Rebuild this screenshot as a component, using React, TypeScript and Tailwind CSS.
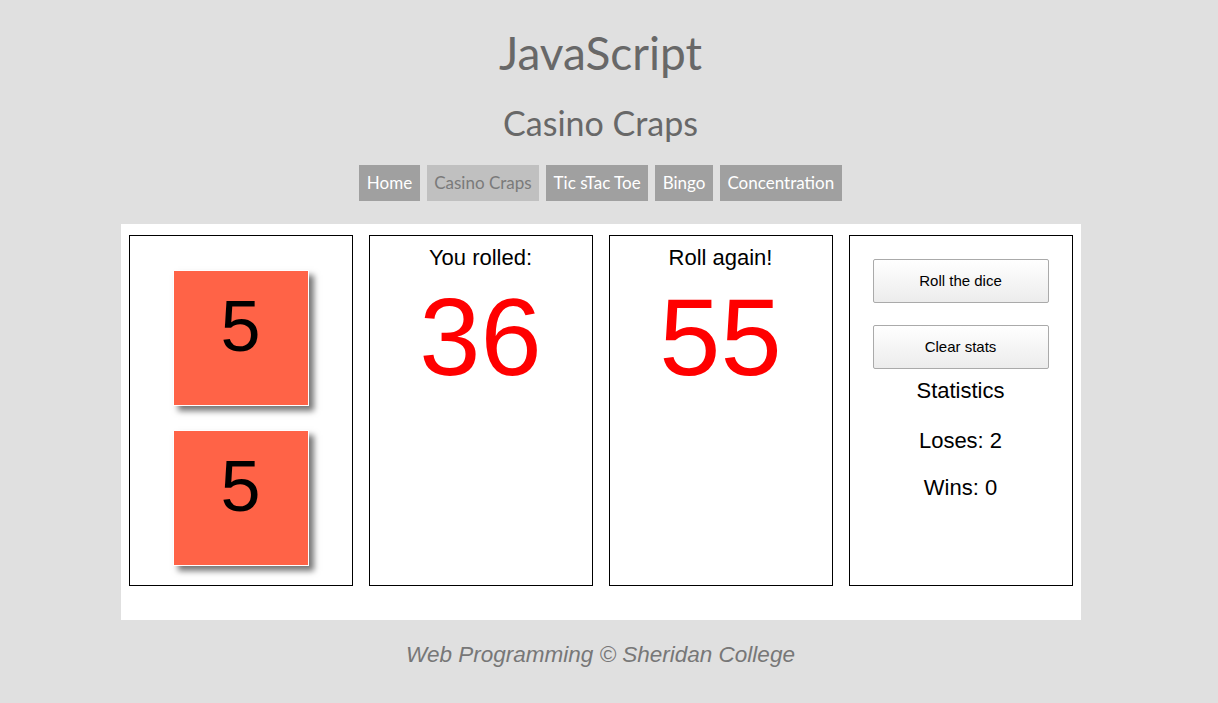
import React from "react";

const lato = { fontFamily: "Lato, 'Noto Sans', sans-serif" };

function Die({ value }: { value: number }) {
  return (
    <div className="w-[136px] h-[136px] bg-[#ff6347] border border-white shadow-[5px_5px_6px_#777] flex justify-center">
      <div className="mt-[19px] text-[72px] leading-none text-black font-['Liberation_Sans',Arial,sans-serif]">
        {value}
      </div>
    </div>
  );
}

function Panel({ children }: { children: React.ReactNode }) {
  return (
    <div className="w-[224px] h-[351px] border border-black flex flex-col items-center font-['Liberation_Sans',Arial,sans-serif]">
      {children}
    </div>
  );
}

export default function App() {
  const nav = ["Home", "Casino Craps", "Tic sTac Toe", "Bingo", "Concentration"];
  return (
    <div className="min-h-[703px] w-full bg-[#e0e0e0]">
      <div className="w-[1201px] flex flex-col items-center">
        <h1
          className="mt-[30px] text-[46px] leading-none text-[#686868]"
          style={lato}
        >
          JavaScript
        </h1>
        <h2
          className="mt-[30px] text-[34px] leading-none text-[#686868]"
          style={lato}
        >
          Casino Craps
        </h2>
        <nav className="mt-[25px] flex gap-[7px]" style={lato}>
          {nav.map((n) => (
            <div
              key={n}
              className={
                n === "Casino Craps"
                  ? "h-[36px] px-[7.5px] flex items-center text-[17px] bg-[#c0c0c0] text-[#7a7a7a]"
                  : "h-[36px] px-[7.5px] flex items-center text-[17px] bg-[#a0a0a0] text-white"
              }
            >
              {n}
            </div>
          ))}
        </nav>
        <main className="mt-[23px] w-[960px] h-[396px] bg-white pt-[11px] px-[8px] flex gap-[16px]">
          <Panel>
            <div className="mt-[34px]">
              <Die value={5} />
            </div>
            <div className="mt-[24px]">
              <Die value={5} />
            </div>
          </Panel>
          <Panel>
            <div className="mt-[11px] text-[22px] leading-none text-black">You rolled:</div>
            <div className="mt-[13px] text-[110px] leading-none text-[#ff0000]">36</div>
          </Panel>
          <Panel>
            <div className="mt-[11px] text-[22px] leading-none text-black">Roll again!</div>
            <div className="mt-[13px] text-[110px] leading-none text-[#ff0000]">55</div>
          </Panel>
          <Panel>
            <button className="mt-[23px] w-[176px] h-[44px] border border-[#aaa] rounded-[2px] bg-gradient-to-b from-white to-[#ececec] text-[15px] text-black">
              Roll the dice
            </button>
            <button className="mt-[22px] w-[176px] h-[44px] border border-[#aaa] rounded-[2px] bg-gradient-to-b from-white to-[#ececec] text-[15px] text-black">
              Clear stats
            </button>
            <div className="mt-[11px] text-[22px] leading-none text-black">Statistics</div>
            <div className="mt-[28px] text-[22px] leading-none text-black">Loses: 2</div>
            <div className="mt-[25px] text-[22px] leading-none text-black">Wins: 0</div>
          </Panel>
        </main>
        <footer className="mt-[24px] text-[22.5px] leading-none italic text-[#777] font-['Liberation_Sans',Arial,sans-serif]">
          Web Programming © Sheridan College
        </footer>
      </div>
    </div>
  );
}
